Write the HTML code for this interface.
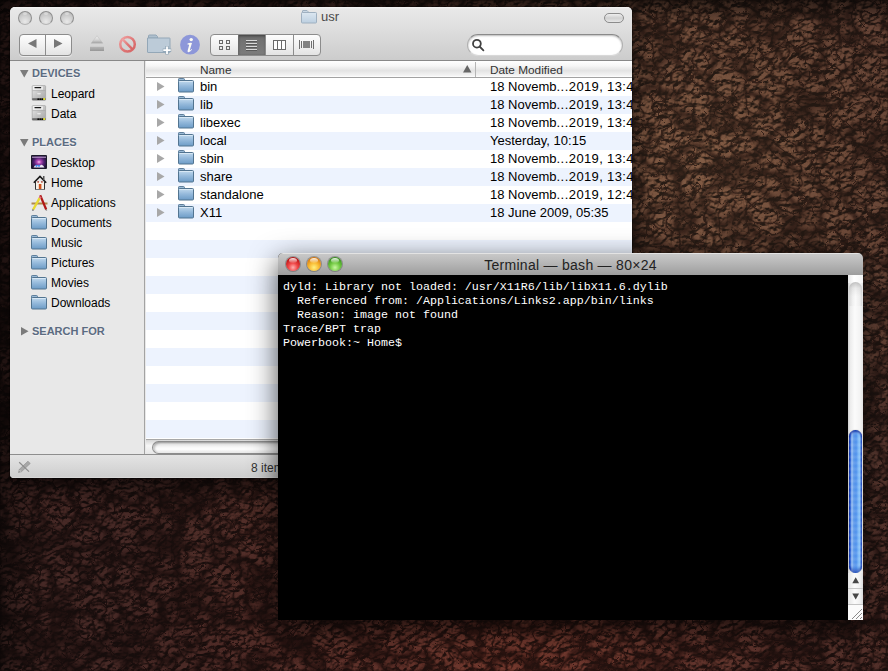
<!DOCTYPE html>
<html><head><meta charset="utf-8">
<style>
*{margin:0;padding:0;box-sizing:border-box}
html,body{width:888px;height:671px;overflow:hidden}
body{position:relative;font-family:"Liberation Sans",sans-serif;
background:#3a2419;}
#bg{position:absolute;left:0;top:0;width:888px;height:671px}
.abs{position:absolute}
/* finder */
#finder{position:absolute;left:10px;top:7px;width:622px;height:471px;border-radius:5px 5px 4px 4px;overflow:hidden;
box-shadow:0 8px 22px rgba(0,0,0,.7),0 0 0 1px rgba(0,0,0,.25);background:#e8e8e8}
#ftool{position:absolute;left:0;top:0;width:622px;height:54px;
background:linear-gradient(#f4f4f4 0,#e8e8e8 4%,#e0e0e0 35%,#cccccc 100%);border-bottom:1px solid #888}
.tl{position:absolute;width:14px;height:14px;border-radius:50%;top:4px;
background:radial-gradient(circle at 50% 80%,#e8e8e8 0,#d2d2d2 45%,#bdbdbd 80%,#a9a9a9 100%);border:1px solid #8e8e8e;border-bottom-color:#b4b4b4}
.tl::after{content:"";position:absolute;left:4px;top:0px;width:4px;height:3px;border-radius:50%;background:rgba(255,255,255,.35)}
#sidebar{position:absolute;left:0;top:54px;width:135px;height:393px;background:#e8e8e8;border-right:1px solid #a3a3a3}
#content{position:absolute;left:136px;top:54px;width:486px;height:378px;background:#fff;overflow:hidden}
#hdr{position:absolute;left:0;top:0;width:486px;height:17px;border-bottom:1px solid #a2a2a2;
background:linear-gradient(#fff 0,#f6f6f6 30%,#e3e3e3 60%,#f3f3f3 90%,#fff)}
.row{position:absolute;left:0;width:486px;height:18px}
.row.b{background:#edf3fe}
.txt{position:absolute;white-space:nowrap;color:#000}
#status{position:absolute;left:0;top:447px;width:622px;height:24px;border-top:1px solid #8e8e8e;
background:linear-gradient(#e4e4e4,#d6d6d6 60%,#cecece 95%,#e0e0e0)}
#hscroll{position:absolute;left:136px;top:432px;width:486px;height:15px;background:linear-gradient(#d6d6d6,#f6f6f6 40%,#e6e6e6);border-top:1px solid #a8a8a8}
/* terminal */
#term{position:absolute;left:278px;top:253px;width:585px;height:367px;border-radius:5px 5px 0 0;overflow:hidden;background:#000;
box-shadow:0 8px 28px rgba(0,0,0,.7)}
#ttitle{position:absolute;left:0;top:0;width:585px;height:22px;background:linear-gradient(#e3e3e3 0,#e3e3e3 1px,#c8c8c8 1px,#b9b9b9 40%,#a2a2a2 90%,#9c9c9c 100%)}
#tbody{position:absolute;left:0;top:22px;width:570px;height:345px;background:#000}
#vscroll{position:absolute;left:570px;top:22px;width:15px;height:345px;background:linear-gradient(90deg,#cfcfcf,#ececec 15%,#fbfbfb 45%,#f3f3f3 80%,#e2e2e2)}
.hd{font-size:11px;font-weight:bold;line-height:12px;color:#5b6b81;text-shadow:0 1px 0 rgba(255,255,255,.6)}
.si{font-size:12px;line-height:14px;letter-spacing:0}
.ct{font-size:13px;line-height:18px;top:0}
.tlc{position:absolute;top:4px;width:14px;height:14px;border-radius:50%;box-shadow:0 0 0 1px rgba(60,60,60,.35)}
.tlc::after{content:"";position:absolute;left:3px;top:1px;width:8px;height:5px;border-radius:50%;background:linear-gradient(rgba(255,255,255,.9),rgba(255,255,255,.1))}
pre{font-family:"Liberation Mono",monospace;font-size:11.67px;line-height:14px;color:#fff}
</style></head><body>
<svg id="bg" width="888" height="671">
<defs>
<filter id="lth" x="0" y="0" width="100%" height="100%" color-interpolation-filters="sRGB">
 <feTurbulence type="turbulence" baseFrequency="0.075 0.085" numOctaves="1" seed="5" result="t1"/>
 <feColorMatrix in="t1" type="matrix" values="1 0 0 0 0  1 0 0 0 0  1 0 0 0 0  0 0 0 0 1" result="c00"/>
 <feGaussianBlur in="c00" stdDeviation="0.5" result="c0"/>
 <feComponentTransfer in="c0" result="crease">
  <feFuncR type="table" tableValues="0.2 0.6 0.9 1 1 1 1 1 1 1 1 1 1 1 1 1 1"/>
  <feFuncG type="table" tableValues="0.14 0.55 0.88 1 1 1 1 1 1 1 1 1 1 1 1 1 1"/>
  <feFuncB type="table" tableValues="0.14 0.55 0.88 1 1 1 1 1 1 1 1 1 1 1 1 1 1"/>
 </feComponentTransfer>
 <feTurbulence type="turbulence" baseFrequency="0.028 0.032" numOctaves="1" seed="9" result="t3"/>
 <feColorMatrix in="t3" type="matrix" values="1 0 0 0 0  1 0 0 0 0  1 0 0 0 0  0 0 0 0 1" result="c30"/>
 <feGaussianBlur in="c30" stdDeviation="0.8" result="c3"/>
 <feComponentTransfer in="c3" result="crease2">
  <feFuncR type="table" tableValues="0.25 0.6 0.9 1 1 1 1 1 1 1 1 1 1 1 1 1"/>
  <feFuncG type="table" tableValues="0.18 0.55 0.88 1 1 1 1 1 1 1 1 1 1 1 1 1"/>
  <feFuncB type="table" tableValues="0.18 0.55 0.88 1 1 1 1 1 1 1 1 1 1 1 1 1"/>
 </feComponentTransfer>
 <feTurbulence type="fractalNoise" baseFrequency="0.18" numOctaves="3" seed="11" result="t2"/>
 <feColorMatrix in="t2" type="matrix" values="0 0 0 0 0  0 0 0 0 0  0 0 0 0 0  1 0 0 0 0" result="h"/>
 <feDiffuseLighting in="h" surfaceScale="5" diffuseConstant="1.2" lighting-color="#fff8f0" result="lit">
   <feDistantLight azimuth="250" elevation="45"/>
 </feDiffuseLighting>
 <feComposite in="lit" in2="crease" operator="arithmetic" k1="1" k2="0" k3="0" k4="0" result="m0"/>
 <feComposite in="m0" in2="crease2" operator="arithmetic" k1="1" k2="0" k3="0" k4="0" result="m1"/>
 <feComposite in="SourceGraphic" in2="m1" operator="arithmetic" k1="1.0" k2="0.45" k3="0" k4="0"/>
</filter>
<radialGradient id="rg" cx="700" cy="160" r="700" gradientUnits="userSpaceOnUse">
<stop offset="0" stop-color="#5a4030"/>
<stop offset="0.2" stop-color="#4c3428"/>
<stop offset="0.45" stop-color="#3e2822"/>
<stop offset="0.7" stop-color="#38221e"/>
<stop offset="1" stop-color="#301c1a"/>
</radialGradient>
<radialGradient id="rg2" cx="520" cy="680" r="420" gradientUnits="userSpaceOnUse">
<stop offset="0" stop-color="#6a2e22" stop-opacity=".5"/>
<stop offset="0.6" stop-color="#5a2820" stop-opacity=".2"/>
<stop offset="1" stop-color="#4a2018" stop-opacity="0"/>
</radialGradient>
<linearGradient id="tv" x1="0" y1="0" x2="0" y2="1"><stop offset="0" stop-color="#000" stop-opacity=".55"/><stop offset=".035" stop-color="#000" stop-opacity="0"/></linearGradient>
<linearGradient id="lv" x1="0" y1="0" x2="1" y2="0"><stop offset="0" stop-color="#000" stop-opacity=".45"/><stop offset=".02" stop-color="#000" stop-opacity=".2"/><stop offset=".05" stop-color="#000" stop-opacity="0"/></linearGradient>
</defs>
<g filter="url(#lth)"><rect width="888" height="671" fill="url(#rg)"/><rect width="888" height="671" fill="url(#rg2)"/></g>
<rect width="888" height="671" fill="url(#tv)"/>
<rect width="888" height="671" fill="url(#lv)"/>
</svg>

<svg width="0" height="0" style="position:absolute">
<defs>
<linearGradient id="fg" x1="0" y1="0" x2="0" y2="1"><stop offset="0" stop-color="#c2daee"/><stop offset="0.5" stop-color="#93b8da"/><stop offset="1" stop-color="#6c9bc6"/></linearGradient>
<symbol id="folder" viewBox="0 0 16 15">
 <path d="M0.5 3 V1.2 Q0.5 0.5 1.2 0.5 H5.6 Q6.3 0.5 6.4 1.2 L6.6 3 Z" fill="#9cbcd7" stroke="#5f7f9c" stroke-width="1"/>
 <rect x="0.5" y="2.5" width="15" height="11.5" rx="1" fill="url(#fg)" stroke="#527490" stroke-width="1"/>
 <path d="M1.5 3.5 H14.5" stroke="#d8e8f5" stroke-width="1"/>
</symbol>
<symbol id="disk" viewBox="0 0 16 16">
 <defs><linearGradient id="dg" x1="0" y1="0" x2="1" y2="1"><stop offset="0" stop-color="#f0f0f0"/><stop offset=".5" stop-color="#c4c4c4"/><stop offset="1" stop-color="#a8a8a8"/></linearGradient></defs>
 <rect x="1.2" y="0.6" width="13.4" height="14.6" rx="0.8" fill="url(#dg)" stroke="#9a9a9a" stroke-width=".6"/>
 <rect x="2" y="1.3" width="10" height="3.4" fill="#fafafa" opacity=".7"/>
 <rect x="3.4" y="2" width="6.8" height="1.3" rx=".6" fill="#1a1a1a"/>
 <path d="M1.5 5.6 H14.3" stroke="#9c9c9c" stroke-width=".5"/>
 <ellipse cx="8" cy="8.8" rx="2.2" ry=".8" fill="#e8e8e8"/>
 <rect x="1.2" y="13.2" width="13.4" height="2" fill="#6a6a6a"/>
 <circle cx="7.2" cy="14.2" r=".9" fill="#0a0a0a"/><circle cx="9.2" cy="14.2" r=".9" fill="#0a0a0a"/><circle cx="11.2" cy="14.2" r=".9" fill="#0a0a0a"/>
 <circle cx="13.2" cy="14" r="1" fill="#f0f020"/>
</symbol>
</defs></svg>
<div id="finder">
 <div id="ftool">
  <div class="tl" style="left:8px"></div>
  <div class="tl" style="left:29px"></div>
  <div class="tl" style="left:50px"></div>
  <svg class="abs" style="left:291px;top:2px" width="17" height="15" viewBox="0 0 17 15">
   <defs><linearGradient id="tf" x1="0" y1="0" x2="0" y2="1"><stop offset="0" stop-color="#dce7f1"/><stop offset="1" stop-color="#bccfe0"/></linearGradient></defs>
   <path d="M1.5 3.5 V2 Q1.5 1.5 2 1.5 H6 L7 2.5 V3.5 Z" fill="#c9d7e4" stroke="#9fb0c0" stroke-width="1"/>
   <rect x="0.5" y="3.5" width="15" height="10.5" rx="0.8" fill="url(#tf)" stroke="#9fb0c0" stroke-width="1"/>
  </svg>
  <div class="txt" style="left:311px;top:1px;font-size:13px;line-height:18px;color:#4a4a4a">usr</div>
  <div class="abs" style="left:594px;top:6px;width:20px;height:10px;border:1px solid #8c8c8c;border-radius:5px;background:linear-gradient(#eeeeee,#d0d0d0 50%,#e6e6e6)"></div>
  <!-- nav -->
  <div class="abs" style="left:9px;top:27px;width:53px;height:22px;border:1px solid #8c8c8c;border-radius:4px;background:linear-gradient(#fdfdfd,#f1f1f1 50%,#e3e3e3);box-shadow:0 1px 0 rgba(255,255,255,.6)"></div>
  <div class="abs" style="left:35px;top:28px;width:1px;height:20px;background:#8c8c8c"></div>
  <svg class="abs" style="left:18px;top:32px" width="10" height="10"><path d="M0 4.5 L8.5 0 V9 Z" fill="#777"/></svg>
  <svg class="abs" style="left:44px;top:32px" width="10" height="10"><path d="M0 0 L8.5 4.5 L0 9 Z" fill="#777"/></svg>
  <!-- eject -->
  <svg class="abs" style="left:79px;top:28px" width="16" height="18" viewBox="0 0 16 18">
   <defs><linearGradient id="ej" x1="0" y1="0" x2="0" y2="1"><stop offset="0" stop-color="#f4f4f4"/><stop offset=".6" stop-color="#d0d0d0"/><stop offset="1" stop-color="#a0a0a0"/></linearGradient>
   <linearGradient id="ej2" x1="0" y1="0" x2="0" y2="1"><stop offset="0" stop-color="#e6e6e6"/><stop offset=".2" stop-color="#b4b4b4"/><stop offset="1" stop-color="#979797"/></linearGradient>
   <linearGradient id="st" x1="0" y1="0" x2="1" y2="1"><stop offset="0" stop-color="#f0a4a4"/><stop offset=".5" stop-color="#e07878"/><stop offset="1" stop-color="#d46464"/></linearGradient></defs>
   <path d="M8 0.8 L13.8 8.2 H2.2 Z" fill="url(#ej)" stroke="#b8b8b8" stroke-width=".5"/>
   <rect x="1" y="11" width="14" height="5" fill="url(#ej2)"/>
  </svg>
  <!-- stop -->
  <svg class="abs" style="left:108px;top:28px" width="20" height="19" viewBox="0 0 20 19">
   <circle cx="9.5" cy="9.3" r="7.3" fill="none" stroke="url(#st)" stroke-width="2.5"/>
   <path d="M4.4 4.2 L14.6 14.4" stroke="url(#st)" stroke-width="2.4"/>
  </svg>
  <!-- new folder -->
  <svg class="abs" style="left:137px;top:27px" width="25" height="21" viewBox="0 0 25 21">
   <path d="M1.5 4 V2 Q1.5 1 2.5 1 H9 L10.5 2.5 V4 Z" fill="#aebfcd" stroke="#92a6b6" stroke-width="1"/>
   <path d="M0.5 4 H22.5 Q23 4 23 4.5 V18 Q23 18.5 22.5 18.5 H1 Q0.5 18.5 0.5 18 Z" fill="#bccbd8" stroke="#93a7b7" stroke-width="1"/>
   <path d="M20 12 V20.5 M15.8 16.2 H24.2" stroke="#93a7b7" stroke-width="3.4"/>
   <path d="M20 12.5 V20 M16.3 16.2 H23.7" stroke="#fff" stroke-width="1.8"/>
  </svg>
  <!-- info -->
  <svg class="abs" style="left:169px;top:27px" width="22" height="22" viewBox="0 0 22 22">
   <circle cx="11" cy="10.7" r="9.9" fill="#8d97d9"/>
   <circle cx="12.2" cy="5.6" r="1.7" fill="#fcfcf4"/>
   <path d="M8.6 9.4 Q10.6 8.6 13 8.9 L10.9 15.8 Q10.7 16.6 11.4 16.2 Q12.2 15.6 12.6 15.1 L13.1 15.6 Q11.6 17.9 9.6 18.2 Q8.2 18.3 8.6 16.8 L10.1 11.2 Q10.2 10.4 9.2 10.5 L8.5 10.6 Z" fill="#fcfcf4"/>
  </svg>
  <!-- segmented -->
  <div class="abs" style="left:200px;top:27px;width:111px;height:22px;border:1px solid #8c8c8c;border-radius:4px;background:linear-gradient(#fdfdfd,#f1f1f1 50%,#e3e3e3);overflow:hidden">
   <div class="abs" style="left:27px;top:0;width:28px;height:20px;background:linear-gradient(#6e6e6e,#7c7c7c);box-shadow:inset 0 1px 3px rgba(0,0,0,.45)"></div>
   <div class="abs" style="left:27px;top:0;width:1px;height:20px;background:#6a6a6a"></div>
   <div class="abs" style="left:54px;top:0;width:1px;height:20px;background:#8c8c8c"></div>
   <div class="abs" style="left:82px;top:0;width:1px;height:20px;background:#8c8c8c"></div>
  </div>
  <svg class="abs" style="left:209px;top:33px" width="12" height="10"><rect x="0.5" y="0.5" width="3" height="3" fill="none" stroke="#6a6a6a"/><rect x="7.5" y="0.5" width="3" height="3" fill="none" stroke="#6a6a6a"/><rect x="0.5" y="6.5" width="3" height="3" fill="none" stroke="#6a6a6a"/><rect x="7.5" y="6.5" width="3" height="3" fill="none" stroke="#6a6a6a"/></svg>
  <svg class="abs" style="left:235px;top:33px" width="13" height="12"><path d="M1 0.5 H12 M1 3.5 H12 M1 6.5 H12 M1 9.5 H12" stroke="#d9d9d9" stroke-width="1"/><path d="M1 1.5 H12 M1 4.5 H12 M1 7.5 H12 M1 10.5 H12" stroke="#595959" stroke-width="1"/></svg>
  <svg class="abs" style="left:263px;top:33px" width="13" height="10"><rect x="0.5" y="0.5" width="12" height="9" fill="#fff" stroke="#6a6a6a"/><path d="M4.5 0 V10 M8.5 0 V10" stroke="#6a6a6a"/></svg>
  <svg class="abs" style="left:289px;top:33px" width="16" height="10"><path d="M0.5 0 V9 M2.5 1 V8 M12.5 1 V8 M14.5 0 V9" stroke="#6f6f6f"/><rect x="4" y="1" width="7" height="7" fill="#828282"/></svg>
  <!-- search -->
  <div class="abs" style="left:457px;top:27px;width:156px;height:22px;border:1px solid;border-color:#8a8a8a #b0b0b0 #d8d8d8 #b0b0b0;border-radius:11px;background:#fff;box-shadow:inset 0 1px 2px rgba(0,0,0,.28)"></div>
  <svg class="abs" style="left:461px;top:31px" width="14" height="14"><circle cx="5.9" cy="5.7" r="3.9" fill="none" stroke="#424242" stroke-width="1.8"/><path d="M8.6 8.5 L12.4 12.3" stroke="#424242" stroke-width="1.8" stroke-linecap="round"/></svg>
 </div>
 <div id="sidebar">
  <svg class="abs" style="left:10px;top:9px" width="9" height="8"><path d="M0 0 H8.5 L4.25 7.5 Z" fill="#7b7b7b"/></svg>
  <div class="txt hd" style="left:22px;top:6px">DEVICES</div>
  <svg class="abs" style="left:21px;top:24px" width="16" height="16"><use href="#disk"/></svg>
  <div class="txt si" style="left:41px;top:26px">Leopard</div>
  <svg class="abs" style="left:21px;top:44px" width="16" height="16"><use href="#disk"/></svg>
  <div class="txt si" style="left:41px;top:46px">Data</div>
  <svg class="abs" style="left:10px;top:78px" width="9" height="8"><path d="M0 0 H8.5 L4.25 7.5 Z" fill="#7b7b7b"/></svg>
  <div class="txt hd" style="left:22px;top:75px">PLACES</div>
  <svg class="abs" style="left:21px;top:94px" width="16" height="14" viewBox="0 0 16 14"><defs><radialGradient id="dsk" cx="0.5" cy="0.5" r="0.6"><stop offset="0" stop-color="#f8c0ec"/><stop offset=".25" stop-color="#b048b4"/><stop offset=".6" stop-color="#4e2070"/><stop offset="1" stop-color="#1c1234"/></radialGradient></defs><rect x="0" y="0" width="16" height="14" rx="1" fill="#1c1a2a"/><rect x="1" y="1" width="14" height="12" fill="url(#dsk)"/><path d="M1 2.2 H15" stroke="#c8a8d8" stroke-width="1"/><path d="M2.5 12.5 L4 10.5 H12 L13.5 12.5 Z" fill="#f0f0f8"/><circle cx="5.5" cy="10.8" r="1.1" fill="#3a8af0"/><circle cx="8" cy="10.8" r="1.1" fill="#3a8af0"/><circle cx="10.5" cy="10.8" r="1.1" fill="#e8e8f0"/></svg><div class="txt si" style="left:41px;top:95px">Desktop</div>
  <svg class="abs" style="left:23px;top:114px" width="14" height="15" viewBox="0 0 14 15"><path d="M2.5 7 V14.5 H11.5 V7" fill="#f6f2ea" stroke="#333" stroke-width="1"/><path d="M0.8 7.8 L7 1.5 L13.2 7.8" fill="none" stroke="#1a1a1a" stroke-width="1.6"/><rect x="10" y="1" width="1.5" height="4" fill="#555"/><rect x="5.8" y="9" width="2.6" height="5" fill="#d0501a"/><rect x="4.5" y="6" width="1.2" height="1.8" fill="#a03020"/><rect x="8.3" y="6" width="1.2" height="1.8" fill="#a03020"/><path d="M2.5 14.5 H11.5" stroke="#777" stroke-width="1"/></svg><div class="txt si" style="left:41px;top:115px">Home</div>
  <svg class="abs" style="left:21px;top:133px" width="17" height="17" viewBox="0 0 17 17"><path d="M0.5 9.5 H16.5" stroke="#b08850" stroke-width="2.2"/><path d="M9.2 1.2 L15.2 15.5" stroke="#b01818" stroke-width="2.2"/><path d="M15.2 15.5 L15.6 16.6" stroke="#777" stroke-width="1.4"/><path d="M2.2 15.5 L8.6 4.2" stroke="#e8d830" stroke-width="2.4"/><path d="M8.6 4.2 L9.6 2.6" stroke="#e07080" stroke-width="2.4"/><path d="M2.2 15.5 L1.6 16.6" stroke="#555" stroke-width="1.4"/></svg><div class="txt si" style="left:41px;top:135px">Applications</div>
  <svg class="abs" style="left:21px;top:154px" width="16" height="15"><use href="#folder"/></svg><div class="txt si" style="left:41px;top:155px">Documents</div>
  <svg class="abs" style="left:21px;top:174px" width="16" height="15"><use href="#folder"/></svg><div class="txt si" style="left:41px;top:175px">Music</div>
  <svg class="abs" style="left:21px;top:194px" width="16" height="15"><use href="#folder"/></svg><div class="txt si" style="left:41px;top:195px">Pictures</div>
  <svg class="abs" style="left:21px;top:214px" width="16" height="15"><use href="#folder"/></svg><div class="txt si" style="left:41px;top:215px">Movies</div>
  <svg class="abs" style="left:21px;top:234px" width="16" height="15"><use href="#folder"/></svg><div class="txt si" style="left:41px;top:235px">Downloads</div>
  <svg class="abs" style="left:11px;top:266px" width="8" height="9"><path d="M0 0 V8.5 L7.5 4.25 Z" fill="#7b7b7b"/></svg>
  <div class="txt hd" style="left:22px;top:264px">SEARCH FOR</div>
 </div>
 <div id="content">
  <div class="row" style="top:17px"><svg class="abs" style="left:11px;top:4px" width="8" height="9"><path d="M0 0 V9 L7.5 4.5 Z" fill="#a8a8a8"/></svg><svg class="abs" style="left:32px;top:0px" width="16" height="15"><use href="#folder"/></svg><div class="txt ct" style="left:54px">bin</div><div class="txt ct" style="left:344px">18 Novemb<span style="letter-spacing:.5px">...</span><span style="letter-spacing:.35px">2019, 13:4</span></div></div>
  <div class="row b" style="top:35px"><svg class="abs" style="left:11px;top:4px" width="8" height="9"><path d="M0 0 V9 L7.5 4.5 Z" fill="#a8a8a8"/></svg><svg class="abs" style="left:32px;top:0px" width="16" height="15"><use href="#folder"/></svg><div class="txt ct" style="left:54px">lib</div><div class="txt ct" style="left:344px">18 Novemb<span style="letter-spacing:.5px">...</span><span style="letter-spacing:.35px">2019, 13:4</span></div></div>
  <div class="row" style="top:53px"><svg class="abs" style="left:11px;top:4px" width="8" height="9"><path d="M0 0 V9 L7.5 4.5 Z" fill="#a8a8a8"/></svg><svg class="abs" style="left:32px;top:0px" width="16" height="15"><use href="#folder"/></svg><div class="txt ct" style="left:54px">libexec</div><div class="txt ct" style="left:344px">18 Novemb<span style="letter-spacing:.5px">...</span><span style="letter-spacing:.35px">2019, 13:4</span></div></div>
  <div class="row b" style="top:71px"><svg class="abs" style="left:11px;top:4px" width="8" height="9"><path d="M0 0 V9 L7.5 4.5 Z" fill="#a8a8a8"/></svg><svg class="abs" style="left:32px;top:0px" width="16" height="15"><use href="#folder"/></svg><div class="txt ct" style="left:54px">local</div><div class="txt ct" style="left:344px">Yesterday, 10:15</div></div>
  <div class="row" style="top:89px"><svg class="abs" style="left:11px;top:4px" width="8" height="9"><path d="M0 0 V9 L7.5 4.5 Z" fill="#a8a8a8"/></svg><svg class="abs" style="left:32px;top:0px" width="16" height="15"><use href="#folder"/></svg><div class="txt ct" style="left:54px">sbin</div><div class="txt ct" style="left:344px">18 Novemb<span style="letter-spacing:.5px">...</span><span style="letter-spacing:.35px">2019, 13:4</span></div></div>
  <div class="row b" style="top:107px"><svg class="abs" style="left:11px;top:4px" width="8" height="9"><path d="M0 0 V9 L7.5 4.5 Z" fill="#a8a8a8"/></svg><svg class="abs" style="left:32px;top:0px" width="16" height="15"><use href="#folder"/></svg><div class="txt ct" style="left:54px">share</div><div class="txt ct" style="left:344px">18 Novemb<span style="letter-spacing:.5px">...</span><span style="letter-spacing:.35px">2019, 13:4</span></div></div>
  <div class="row" style="top:125px"><svg class="abs" style="left:11px;top:4px" width="8" height="9"><path d="M0 0 V9 L7.5 4.5 Z" fill="#a8a8a8"/></svg><svg class="abs" style="left:32px;top:0px" width="16" height="15"><use href="#folder"/></svg><div class="txt ct" style="left:54px">standalone</div><div class="txt ct" style="left:344px">18 Novemb<span style="letter-spacing:.5px">...</span><span style="letter-spacing:.35px">2019, 12:4</span></div></div>
  <div class="row b" style="top:143px"><svg class="abs" style="left:11px;top:4px" width="8" height="9"><path d="M0 0 V9 L7.5 4.5 Z" fill="#a8a8a8"/></svg><svg class="abs" style="left:32px;top:0px" width="16" height="15"><use href="#folder"/></svg><div class="txt ct" style="left:54px">X11</div><div class="txt ct" style="left:344px">18 June 2009, 05:35</div></div>
  <div class="row" style="top:161px"></div>
  <div class="row b" style="top:179px"></div>
  <div class="row" style="top:197px"></div>
  <div class="row b" style="top:215px"></div>
  <div class="row" style="top:233px"></div>
  <div class="row b" style="top:251px"></div>
  <div class="row" style="top:269px"></div>
  <div class="row b" style="top:287px"></div>
  <div class="row" style="top:305px"></div>
  <div class="row b" style="top:323px"></div>
  <div class="row" style="top:341px"></div>
  <div class="row b" style="top:359px"></div>
  <div class="row" style="top:377px"></div>
  <div id="hdr"><div class="txt" style="left:54px;top:2px;font-size:11.8px;line-height:15px;color:#333">Name</div>
  <svg class="abs" style="left:317px;top:4px" width="9" height="8"><path d="M0 7.5 L4.25 0 L8.5 7.5 Z" fill="#666"/></svg>
  <div class="abs" style="left:329px;top:1px;width:1px;height:15px;background:#b5b5b5"></div>
  <div class="txt" style="left:344px;top:2px;font-size:11.8px;line-height:15px;color:#333">Date Modified</div></div>
 </div>
 <div id="hscroll">
  <div class="abs" style="left:6px;top:1px;width:500px;height:13px;border-radius:7px 0 0 7px;border:1px solid #8c8c8c;border-right:none;background:linear-gradient(#bdbdbd 0,#e4e4e4 20%,#f6f6f6 45%,#fdfdfd 65%,#ececec 90%);box-shadow:inset 2px 1px 2px rgba(0,0,0,.2)"></div>
 </div>
 <div id="status">
  <svg class="abs" style="left:7px;top:5px" width="14" height="14" viewBox="0 0 14 14"><path d="M1.5 12.5 L2.4 9.3 L11 1.2 L13.2 3.5 L4.6 11.6 Z" fill="#a8a8a8" stroke="#8a8a8a" stroke-width=".6"/><path d="M2.6 10.6 L3.6 11.2" stroke="#e8e8e8" stroke-width="1"/><path d="M2.2 2.2 L12 11.6" stroke="#8c8c8c" stroke-width="1.2"/></svg>
  <div class="txt" style="left:241px;top:6px;font-size:12px;line-height:14px;color:#333">8 items, 2,3 GB available</div>
 </div>
</div>

<div id="term">
 <div id="ttitle">
  <div class="tlc" style="left:8px;background:radial-gradient(circle at 50% 75%,#ffb0b0 0,#f04848 35%,#c01818 70%,#8a0d0d 100%)"></div>
  <div class="tlc" style="left:29px;background:radial-gradient(circle at 50% 75%,#fff080 0,#f8b830 40%,#d87a10 75%,#a05a08 100%)"></div>
  <div class="tlc" style="left:50px;background:radial-gradient(circle at 50% 75%,#c8f8a0 0,#70c840 40%,#3a9420 75%,#246810 100%)"></div>
  <div class="txt" style="left:0;width:585px;text-align:center;top:4px;font-size:14px;line-height:16px;color:#222;letter-spacing:0.28px">Terminal — bash — 80×24</div>
 </div>
 <div id="tbody"><pre style="position:absolute;left:5px;top:5px">dyld: Library not loaded: /usr/X11R6/lib/libX11.6.dylib
  Referenced from: /Applications/Links2.app/bin/links
  Reason: image not found
Trace/BPT trap
Powerbook:~ Home$</pre></div>
 <div id="vscroll">
  <div class="abs" style="left:0;top:0;width:15px;height:8px;background:linear-gradient(90deg,#e8e8e8,#fff 40%,#f4f4f4)"></div>
  <div class="abs" style="left:1px;top:7px;width:13px;height:24px;border-radius:6.5px 6.5px 0 0;background:linear-gradient(rgba(0,0,0,.22),rgba(0,0,0,.06) 25%,rgba(0,0,0,0) 60%),linear-gradient(90deg,#d8d8d8,#f2f2f2 30%,#fafafa 50%,#ededed 85%,#d8d8d8)"></div>
  <div class="abs" style="left:1px;top:155px;width:13px;height:143px;border-radius:6.5px;background:linear-gradient(90deg,#0c36b0 0,#2a66dc 10%,#9cc2f2 22%,#5c98ea 36%,#4e90ec 55%,#8cc8fc 80%,#5a94e8 92%,#1c4cc4 100%);box-shadow:inset 0 2px 2px rgba(0,20,140,.7),inset 0 -3px 3px rgba(0,30,150,.6), 0 0 1px rgba(0,0,0,.5)"></div>
  <div class="abs" style="left:1px;top:155px;width:13px;height:143px;border-radius:6.5px;background:repeating-linear-gradient(rgba(255,255,255,0) 0,rgba(255,255,255,.12) 3px,rgba(255,255,255,0) 6px)"></div>
  <div class="abs" style="left:0;top:298px;width:15px;height:32px;background:linear-gradient(90deg,#e4e4e4,#fbfbfb 45%,#f0f0f0 80%,#dadada)"></div>
  <div class="abs" style="left:0;top:313px;width:15px;height:1px;background:#c8c8c8"></div>
  <div class="abs" style="left:0;top:329px;width:15px;height:1px;background:#c4c4c4"></div>
  <svg class="abs" style="left:4px;top:302px" width="8" height="7"><path d="M0.3 6.2 L3.7 0.3 L7.1 6.2 Z" fill="#464646"/></svg>
  <svg class="abs" style="left:4px;top:318px" width="8" height="7"><path d="M0.3 0.5 L3.7 6.4 L7.1 0.5 Z" fill="#464646"/></svg>
  <div class="abs" style="left:0;top:330px;width:15px;height:15px;background:#fbfbfb"></div>
  <svg class="abs" style="left:0;top:330px" width="15" height="15"><path d="M4 14 L14 4 M8 14 L14 8 M12 14 L14 12" stroke="#8a8a8a" stroke-width="1"/></svg>
 </div>
</div>
</body></html>
